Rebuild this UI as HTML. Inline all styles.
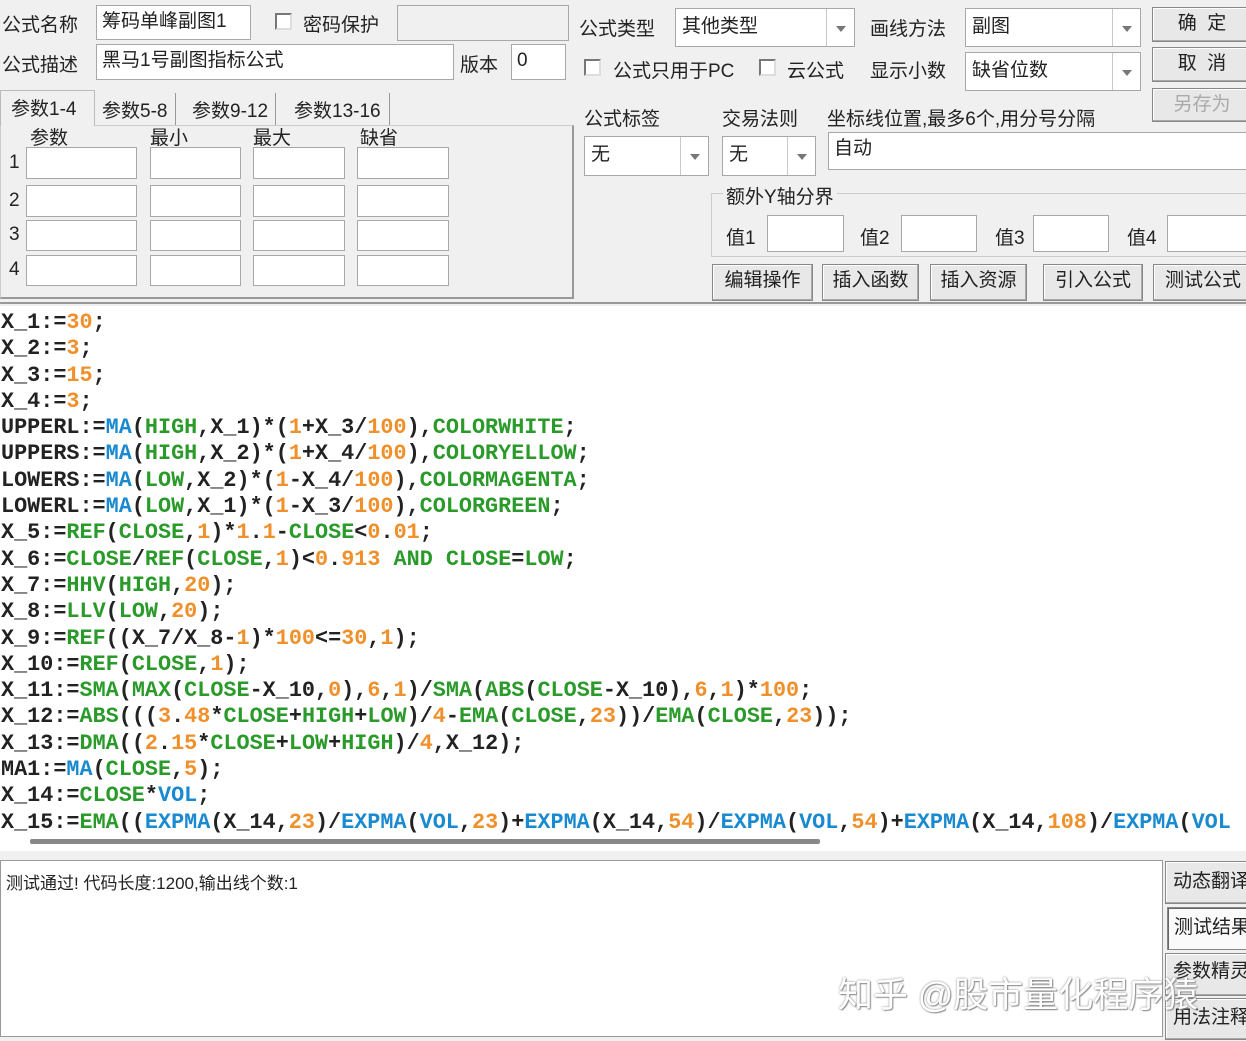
<!DOCTYPE html>
<html><head><meta charset="utf-8"><style>
*{box-sizing:border-box;margin:0;padding:0}
body{width:1246px;height:1041px;background:#f0f0f0;position:relative;overflow:hidden;font-family:"Liberation Sans","Noto Sans CJK SC",sans-serif;font-size:19px;color:#222}
.a{position:absolute;white-space:nowrap}
.in{position:absolute;background:#fff;border:1px solid #a8a8a8;padding:2px 5px;line-height:28px}
.cb{position:absolute;width:17px;height:17px;border:2px solid #777;border-right-color:#ddd;border-bottom-color:#ddd;background:#fff}
.sel{position:absolute;background:#fff;border:1px solid #a8a8a8;padding:4px 6px;line-height:28px}
.sel i{position:absolute;right:0;top:0;bottom:0;width:28px;border-left:1px solid #c8c8c8;background:#fff}
.sel i:after{content:"";position:absolute;left:9px;top:50%;margin-top:-2px;border:5px solid transparent;border-top:6px solid #777}
.btn{position:absolute;background:#e8e8e8;border:1px solid #888;text-align:center;box-shadow:inset -1px -1px 0 #aaa,inset 1px 1px 0 #fff;line-height:32px}
.code{position:absolute;left:0;top:306px;width:1246px;height:545px;background:#fff;overflow:hidden}
.code pre{position:absolute;left:1px;top:4px;font-family:"Liberation Mono",monospace;font-weight:bold;font-size:21.8px;line-height:26.3px;color:#222;letter-spacing:0}
.n{color:#f0902a}.b{color:#1a8ad0}.g{color:#2a9a2a}
</style></head><body>
<div class="a" style="left:2px;top:10px">公式名称</div>
<div class="in" style="left:96px;top:5px;width:155px;height:35px">筹码单峰副图1</div>
<div class="cb" style="left:275px;top:13px"></div>
<div class="a" style="left:303px;top:10px">密码保护</div>
<div class="in" style="left:397px;top:5px;width:172px;height:36px;background:#f0f0f0"></div>
<div class="a" style="left:2px;top:50px">公式描述</div>
<div class="in" style="left:96px;top:44px;width:358px;height:36px">黑马1号副图指标公式</div>
<div class="a" style="left:460px;top:50px">版本</div>
<div class="in" style="left:511px;top:44px;width:55px;height:36px">0</div>

<div class="a" style="left:0;top:90px;width:95px;height:36px;border:1px solid #bbb;border-bottom:none;background:#f0f0f0;padding:3px 0 0 10px;z-index:2">参数1-4</div>
<div class="a" style="left:95px;top:93px;height:32px;border-right:1px solid #999;padding:3px 8px 0 7px">参数5-8</div>
<div class="a" style="left:185px;top:93px;height:32px;border-right:1px solid #999;padding:3px 7px 0 7px">参数9-12</div>
<div class="a" style="left:285px;top:93px;height:32px;border-right:1px solid #999;padding:3px 8px 0 9px">参数13-16</div>
<div class="a" style="left:0;top:125px;width:574px;height:174px;border:1px solid #ccc;border-right:2px solid #999;border-bottom:2px solid #999"></div>
<div class="a" style="left:30px;top:123px">参数</div>
<div class="a" style="left:150px;top:123px">最小</div>
<div class="a" style="left:253px;top:123px">最大</div>
<div class="a" style="left:360px;top:123px">缺省</div>
<div class="a" style="left:9px;top:152px">1</div><div class="a" style="left:9px;top:190px">2</div><div class="a" style="left:9px;top:224px">3</div><div class="a" style="left:9px;top:259px">4</div>
<div class="in" style="left:26px;top:147px;width:111px;height:32px"></div><div class="in" style="left:150px;top:147px;width:91px;height:32px"></div><div class="in" style="left:253px;top:147px;width:92px;height:32px"></div><div class="in" style="left:357px;top:147px;width:92px;height:32px"></div>
<div class="in" style="left:26px;top:185px;width:111px;height:32px"></div><div class="in" style="left:150px;top:185px;width:91px;height:32px"></div><div class="in" style="left:253px;top:185px;width:92px;height:32px"></div><div class="in" style="left:357px;top:185px;width:92px;height:32px"></div>
<div class="in" style="left:26px;top:220px;width:111px;height:31px"></div><div class="in" style="left:150px;top:220px;width:91px;height:31px"></div><div class="in" style="left:253px;top:220px;width:92px;height:31px"></div><div class="in" style="left:357px;top:220px;width:92px;height:31px"></div>
<div class="in" style="left:26px;top:255px;width:111px;height:31px"></div><div class="in" style="left:150px;top:255px;width:91px;height:31px"></div><div class="in" style="left:253px;top:255px;width:92px;height:31px"></div><div class="in" style="left:357px;top:255px;width:92px;height:31px"></div>

<div class="a" style="left:579px;top:14px">公式类型</div>
<div class="sel" style="left:675px;top:8px;width:180px;height:39px">其他类型<i></i></div>
<div class="a" style="left:870px;top:14px">画线方法</div>
<div class="sel" style="left:965px;top:8px;width:176px;height:39px">副图<i></i></div>
<div class="btn" style="left:1152px;top:7px;width:100px;height:35px">确&nbsp;&nbsp;定</div>
<div class="cb" style="left:584px;top:59px"></div>
<div class="a" style="left:613px;top:56px">公式只用于PC</div>
<div class="cb" style="left:759px;top:59px"></div>
<div class="a" style="left:787px;top:56px">云公式</div>
<div class="a" style="left:870px;top:56px">显示小数</div>
<div class="sel" style="left:965px;top:52px;width:176px;height:39px">缺省位数<i></i></div>
<div class="btn" style="left:1152px;top:47px;width:100px;height:35px">取&nbsp;&nbsp;消</div>
<div class="btn" style="left:1152px;top:88px;width:100px;height:34px;color:#aaa">另存为</div>
<div class="a" style="left:584px;top:104px">公式标签</div>
<div class="a" style="left:722px;top:104px">交易法则</div>
<div class="a" style="left:827px;top:104px">坐标线位置,最多6个,用分号分隔</div>
<div class="sel" style="left:584px;top:136px;width:125px;height:40px">无<i></i></div>
<div class="sel" style="left:722px;top:136px;width:94px;height:40px">无<i></i></div>
<div class="in" style="left:828px;top:132px;width:430px;height:38px">自动</div>
<div class="a" style="left:711px;top:193px;width:560px;height:64px;border:1px solid #ccc"></div>
<div class="a" style="left:723px;top:182px;background:#f0f0f0;padding:0 3px">额外Y轴分界</div>
<div class="a" style="left:726px;top:223px">值1</div><div class="in" style="left:767px;top:215px;width:77px;height:37px"></div>
<div class="a" style="left:860px;top:223px">值2</div><div class="in" style="left:901px;top:215px;width:76px;height:37px"></div>
<div class="a" style="left:995px;top:223px">值3</div><div class="in" style="left:1033px;top:215px;width:76px;height:37px"></div>
<div class="a" style="left:1127px;top:223px">值4</div><div class="in" style="left:1167px;top:215px;width:90px;height:37px"></div>
<div class="btn" style="left:712px;top:264px;width:101px;height:37px">编辑操作</div>
<div class="btn" style="left:822px;top:264px;width:97px;height:37px">插入函数</div>
<div class="btn" style="left:930px;top:264px;width:97px;height:37px">插入资源</div>
<div class="btn" style="left:1043px;top:264px;width:100px;height:37px">引入公式</div>
<div class="btn" style="left:1153px;top:264px;width:100px;height:37px">测试公式</div>
<div class="a" style="left:0;top:302px;width:1246px;height:2px;background:#999"></div>

<div class="code"><pre>X_1:=<span class="n">30</span>;
X_2:=<span class="n">3</span>;
X_3:=<span class="n">15</span>;
X_4:=<span class="n">3</span>;
UPPERL:=<span class="b">MA</span>(<span class="g">HIGH</span>,X_1)*(<span class="n">1</span>+X_3/<span class="n">100</span>),<span class="g">COLORWHITE</span>;
UPPERS:=<span class="b">MA</span>(<span class="g">HIGH</span>,X_2)*(<span class="n">1</span>+X_4/<span class="n">100</span>),<span class="g">COLORYELLOW</span>;
LOWERS:=<span class="b">MA</span>(<span class="g">LOW</span>,X_2)*(<span class="n">1</span>-X_4/<span class="n">100</span>),<span class="g">COLORMAGENTA</span>;
LOWERL:=<span class="b">MA</span>(<span class="g">LOW</span>,X_1)*(<span class="n">1</span>-X_3/<span class="n">100</span>),<span class="g">COLORGREEN</span>;
X_5:=<span class="g">REF</span>(<span class="g">CLOSE</span>,<span class="n">1</span>)*<span class="n">1</span>.<span class="n">1</span>-<span class="g">CLOSE</span>&lt;<span class="n">0</span>.<span class="n">01</span>;
X_6:=<span class="g">CLOSE</span>/<span class="g">REF</span>(<span class="g">CLOSE</span>,<span class="n">1</span>)&lt;<span class="n">0</span>.<span class="n">913</span> <span class="g">AND</span> <span class="g">CLOSE</span>=<span class="g">LOW</span>;
X_7:=<span class="g">HHV</span>(<span class="g">HIGH</span>,<span class="n">20</span>);
X_8:=<span class="g">LLV</span>(<span class="g">LOW</span>,<span class="n">20</span>);
X_9:=<span class="g">REF</span>((X_7/X_8-<span class="n">1</span>)*<span class="n">100</span>&lt;=<span class="n">30</span>,<span class="n">1</span>);
X_10:=<span class="g">REF</span>(<span class="g">CLOSE</span>,<span class="n">1</span>);
X_11:=<span class="g">SMA</span>(<span class="g">MAX</span>(<span class="g">CLOSE</span>-X_10,<span class="n">0</span>),<span class="n">6</span>,<span class="n">1</span>)/<span class="g">SMA</span>(<span class="g">ABS</span>(<span class="g">CLOSE</span>-X_10),<span class="n">6</span>,<span class="n">1</span>)*<span class="n">100</span>;
X_12:=<span class="g">ABS</span>(((<span class="n">3</span>.<span class="n">48</span>*<span class="g">CLOSE</span>+<span class="g">HIGH</span>+<span class="g">LOW</span>)/<span class="n">4</span>-<span class="g">EMA</span>(<span class="g">CLOSE</span>,<span class="n">23</span>))/<span class="g">EMA</span>(<span class="g">CLOSE</span>,<span class="n">23</span>));
X_13:=<span class="g">DMA</span>((<span class="n">2</span>.<span class="n">15</span>*<span class="g">CLOSE</span>+<span class="g">LOW</span>+<span class="g">HIGH</span>)/<span class="n">4</span>,X_12);
MA1:=<span class="b">MA</span>(<span class="g">CLOSE</span>,<span class="n">5</span>);
X_14:=<span class="g">CLOSE</span>*<span class="b">VOL</span>;
X_15:=<span class="g">EMA</span>((<span class="b">EXPMA</span>(X_14,<span class="n">23</span>)/<span class="b">EXPMA</span>(<span class="b">VOL</span>,<span class="n">23</span>)+<span class="b">EXPMA</span>(X_14,<span class="n">54</span>)/<span class="b">EXPMA</span>(<span class="b">VOL</span>,<span class="n">54</span>)+<span class="b">EXPMA</span>(X_14,<span class="n">108</span>)/<span class="b">EXPMA</span>(<span class="b">VOL</span></pre>
<div class="a" style="left:30px;top:533px;width:790px;height:5px;background:#888;border-radius:2px"></div>
</div>

<div class="a" style="left:0;top:860px;width:1163px;height:177px;background:#fff;border:1px solid #999"></div>
<div class="a" style="left:6px;top:869px;font-size:17px">测试通过! 代码长度:1200,输出线个数:1</div>
<div class="btn" style="left:1165px;top:861px;width:90px;height:43px;line-height:40px;text-align:left;padding-left:7px">动态翻译</div>
<div class="btn" style="left:1167px;top:907px;width:90px;height:43px;line-height:40px;text-align:left;padding-left:6px;background:#fafafa;box-shadow:inset 1px 1px 0 #666">测试结果</div>
<div class="btn" style="left:1165px;top:953px;width:90px;height:43px;line-height:36px;text-align:left;padding-left:7px">参数精灵</div>
<div class="btn" style="left:1165px;top:998px;width:90px;height:42px;line-height:38px;text-align:left;padding-left:7px">用法注释</div>
<div class="a" style="left:838px;top:967px;font-size:35px;color:#fff;text-shadow:0 0 2px #777,1px 1px 1px #888;opacity:.9">知乎 @股市量化程序猿</div>
</body></html>
